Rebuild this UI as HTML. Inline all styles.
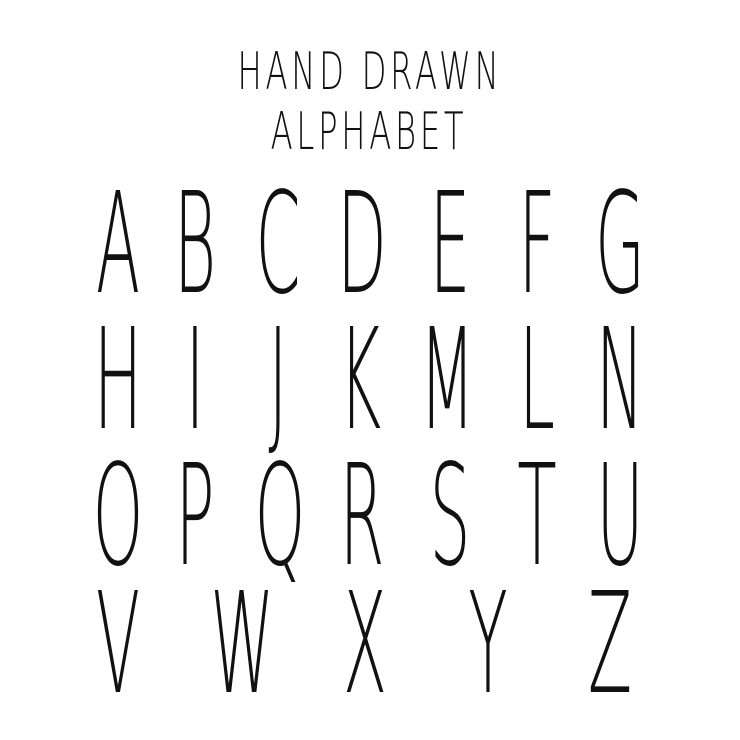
<!DOCTYPE html>
<html><head><meta charset="utf-8"><style>
html,body{margin:0;padding:0;background:#fff;}
body{width:740px;height:740px;position:relative;overflow:hidden;}
.l{position:absolute;font-family:"DejaVu Sans ExtraLight","DejaVu Sans","Liberation Sans",sans-serif;font-weight:200;color:#111;line-height:1;transform-origin:center top;white-space:nowrap;text-align:center;}
.big{font-size:140px;width:120px;margin-left:-60px;transform:scaleX(0.46);}
.t{font-size:52px;width:600px;margin-left:-300px;letter-spacing:6px;transform:scaleX(0.62);}
</style></head><body>
<div class="l t" style="left:370px;top:46px">HAND DRAWN</div>
<div class="l t" style="left:369px;top:106px">ALPHABET</div>

<div class="l big" style="left:118px;top:175px">A</div>
<div class="l big" style="left:195px;top:175px">B</div>
<div class="l big" style="left:278px;top:175px">C</div>
<div class="l big" style="left:362px;top:175px">D</div>
<div class="l big" style="left:450px;top:175px">E</div>
<div class="l big" style="left:537px;top:175px">F</div>
<div class="l big" style="left:620px;top:175px">G</div>

<div class="l big" style="left:118px;top:311px">H</div>
<div class="l big" style="left:195px;top:311px">I</div>
<div class="l big" style="left:278px;top:311px">J</div>
<div class="l big" style="left:360px;top:311px">K</div>
<div class="l big" style="left:447px;top:311px">M</div>
<div class="l big" style="left:537px;top:311px">L</div>
<div class="l big" style="left:620px;top:311px">N</div>

<div class="l big" style="left:118px;top:447px">O</div>
<div class="l big" style="left:195px;top:447px">P</div>
<div class="l big" style="left:280px;top:447px">Q</div>
<div class="l big" style="left:362px;top:447px">R</div>
<div class="l big" style="left:450px;top:447px">S</div>
<div class="l big" style="left:537px;top:447px">T</div>
<div class="l big" style="left:620px;top:447px">U</div>

<div class="l big" style="left:118px;top:575px">V</div>
<div class="l big" style="left:238px;top:575px">W</div>
<div class="l big" style="left:365px;top:575px">X</div>
<div class="l big" style="left:488px;top:575px">Y</div>
<div class="l big" style="left:610px;top:575px">Z</div>
</body></html>
